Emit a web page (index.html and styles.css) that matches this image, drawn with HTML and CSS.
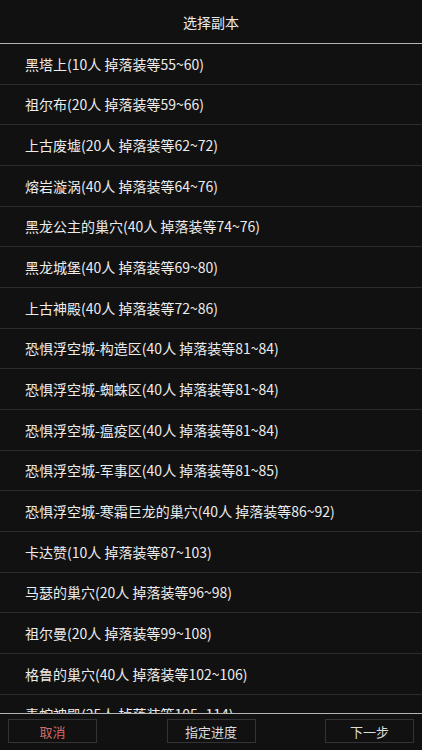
FILE: index.html
```html
<!DOCTYPE html>
<html lang="zh">
<head>
<meta charset="utf-8">
<link rel="stylesheet" href="styles.css">
</head>
<body>
<div class="screen">
  <header class="title">选择副本</header>
  <ul class="list">
    <li class="row">黑塔上(10人 掉落装等55~60)</li>
    <li class="row">祖尔布(20人 掉落装等59~66)</li>
    <li class="row">上古废墟(20人 掉落装等62~72)</li>
    <li class="row">熔岩漩涡(40人 掉落装等64~76)</li>
    <li class="row">黑龙公主的巢穴(40人 掉落装等74~76)</li>
    <li class="row">黑龙城堡(40人 掉落装等69~80)</li>
    <li class="row">上古神殿(40人 掉落装等72~86)</li>
    <li class="row">恐惧浮空城-构造区(40人 掉落装等81~84)</li>
    <li class="row">恐惧浮空城-蜘蛛区(40人 掉落装等81~84)</li>
    <li class="row">恐惧浮空城-瘟疫区(40人 掉落装等81~84)</li>
    <li class="row">恐惧浮空城-军事区(40人 掉落装等81~85)</li>
    <li class="row">恐惧浮空城-寒霜巨龙的巢穴(40人 掉落装等86~92)</li>
    <li class="row">卡达赞(10人 掉落装等87~103)</li>
    <li class="row">马瑟的巢穴(20人 掉落装等96~98)</li>
    <li class="row">祖尔曼(20人 掉落装等99~108)</li>
    <li class="row">格鲁的巢穴(40人 掉落装等102~106)</li>
    <li class="row">毒蛇神殿(25人 掉落装等105~114)</li>
  </ul>
  <footer class="bar">
    <button class="btn btn-cancel">取消</button>
    <button class="btn">指定进度</button>
    <button class="btn">下一步</button>
  </footer>
</div>
</body>
</html>
```
FILE: styles.css
```css
html, body {
  margin: 0;
  padding: 0;
  background: #111111;
}
body {
  font-family: "Noto Sans CJK SC", "Noto Sans", sans-serif;
  color: #e6e6e6;
}
.screen {
  width: 422px;
  height: 750px;
  display: flex;
  flex-direction: column;
  overflow: hidden;
}
.title {
  height: 43px;
  flex: none;
  display: flex;
  align-items: center;
  justify-content: center;
  font-size: 14px;
  color: #ececec;
  border-bottom: 1px solid #b4b4b4;
}
.list {
  list-style: none;
  margin: 0;
  padding: 0;
  flex: 1;
  min-height: 0;
  overflow: hidden;
}
.row {
  height: 39.67px;
  border-bottom: 1px solid #2c2c2c;
  display: flex;
  align-items: center;
  padding-left: 25px;
  font-size: 14px;
  color: #ececec;
  white-space: nowrap;
}
.bar {
  height: 31px;
  flex: none;
  border-top: 1px solid #b4b4b4;
  display: flex;
  justify-content: space-between;
  align-items: flex-start;
  padding: 5px 8px 0;
}
.btn {
  width: 89px;
  height: 24px;
  background: #111111;
  border: 1px solid #333333;
  color: #dcdcdc;
  font-family: "Noto Sans CJK SC", "Noto Sans", sans-serif;
  font-size: 13px;
  padding: 0;
  display: flex;
  align-items: center;
  justify-content: center;
}
.btn-cancel {
  color: #cf6b6b;
}
```
